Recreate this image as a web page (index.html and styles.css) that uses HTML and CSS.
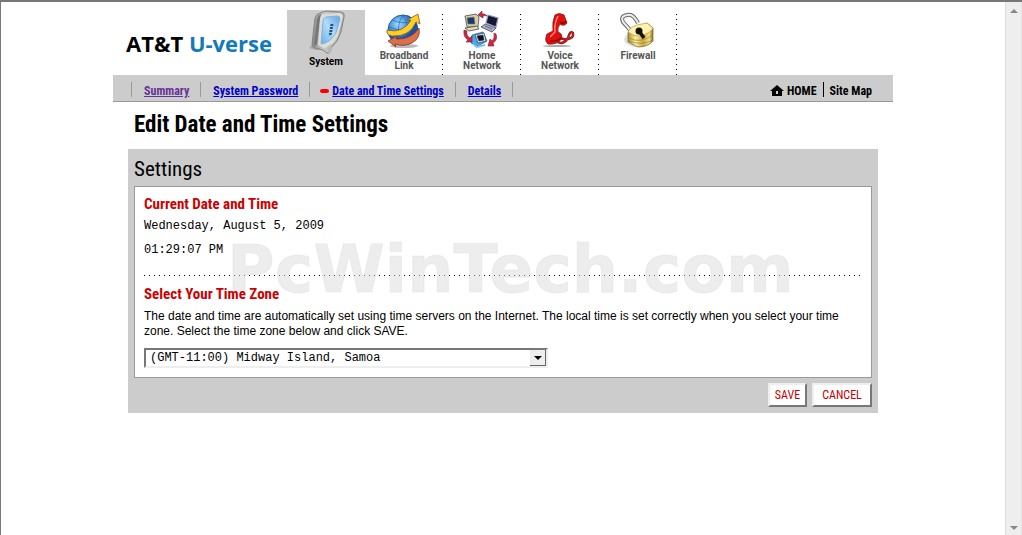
FILE: index.html
```html
<!DOCTYPE html>
<html lang="en">
<head>
<meta charset="utf-8">
<title>Edit Date and Time Settings</title>
<link rel="stylesheet" href="styles.css">
</head>
<body>
<div class="window">
  <div class="page">
    <header class="header">
      <a class="logo" href="#"><span class="logo-att">AT&amp;T</span> <span class="logo-uverse">U-verse</span></a>
      <nav class="tabs" aria-label="Sections">
        <a class="tab tab-active" href="#">
          <svg class="tab-icon" viewBox="0 0 48 44" aria-hidden="true">
            <defs>
              <linearGradient id="shell" x1="0" x2="1"><stop offset="0" stop-color="#858585"/><stop offset=".35" stop-color="#c9c9c6"/><stop offset="1" stop-color="#a4a4a0"/></linearGradient>
              <linearGradient id="screen" x1="0" x2="1" y1="1" y2="0"><stop offset="0" stop-color="#6aaeea"/><stop offset=".5" stop-color="#b4dcfb"/><stop offset="1" stop-color="#5aa5e8"/></linearGradient>
            </defs>
            <path d="M7 38 16 28 20 40 13 40Z" fill="#aaa"/>
            <path d="M18 3Q14 4 13 8L10 34Q10 38 13 38L21 40 25 43Q28 45 29 38Q36 32 39 22L42 7Q43 2 38 2L24 1Z" fill="url(#shell)" stroke="#858585"/>
            <path d="M19 4Q16 5 15 9L12 34Q13 37 15 34L18 9Z" fill="#777"/>
            <path d="M21 4Q18 6 18 10L16 35 22 38Q31 36 36 26L41 7Q41 3 37 3Z" fill="#deded9"/>
            <path d="M24 7Q21 8 21 11L19 34Q28 33 34 23L38 9Q38 6 35 6Z" fill="url(#screen)" stroke="#7fb2dc"/>
            <path d="M30 14 28 26" stroke="#234e78" stroke-width="3" stroke-dasharray="2 1"/>
            <path d="M26 37V44L30 40 29 34Z" fill="#b8b8b8"/>
          </svg>
          <span class="tab-label">System</span>
        </a>
        <a class="tab" href="#">
          <svg class="tab-icon" viewBox="0 0 48 44" aria-hidden="true">
            <defs><radialGradient id="globe" cx=".35" cy=".3"><stop offset="0" stop-color="#a8dcff"/><stop offset=".6" stop-color="#4496dc"/><stop offset="1" stop-color="#1c4f9d"/></radialGradient></defs>
            <ellipse cx="24" cy="36" rx="14" ry="2" fill="#bbb"/>
            <circle cx="23" cy="20" r="15" fill="url(#globe)" stroke="#245ba5"/>
            <path d="M12 10Q23 15 35 11M9 17Q23 23 37 18M23 5Q14 18 22 35M23 5Q31 18 24 35" fill="none" stroke="#2469b6" stroke-width=".7"/>
            <path d="M7 20Q23 24 31 10L27 10 38 4 40 14 36 12Q30 27 12 26Q6 25 7 20Z" fill="#fbcf2b" stroke="#8b5c15" stroke-width=".8"/>
            <path d="M39 18Q41 28 32 33Q24 37 15 34L16 37 8 31 17 26 16 29Q31 30 39 18Z" fill="#dc704c" stroke="#82351f" stroke-width=".8"/>
          </svg>
          <span class="tab-label">Broadband<br>Link</span>
        </a>
        <a class="tab" href="#">
          <svg class="tab-icon" viewBox="0 0 48 44" aria-hidden="true">
            <g stroke="#34343e" stroke-width=".7">
              <path d="M7 6 18 4 21 7 20 17 9 17Z" fill="#d5d1a5"/><path d="M9 8 16 7 17 14 10 14Z" fill="#1c327e" stroke="#777855"/><path d="M7 18 19 16 21 19 11 21Z" fill="#ddd9b2"/>
              <path d="M30 5 40 8 38 17 28 13Z" fill="#111936" stroke="#9a9abb" stroke-width="1.2"/><path d="M27 14 38 18 34 22 23 17Z" fill="#aaaed0"/><path d="M27 16 34 19" stroke="#484865"/>
              <path d="M14 25 25 22 29 31 20 36 13 33Z" fill="#45a8ed" stroke="#1667a9"/><path d="M17 25 26 23 28 31 20 33Z" fill="#edf9ff"/><path d="M19 26 25 25 26 30 21 31Z" fill="#0c1429"/>
              <path d="M15 34 19 37 27 35" fill="none" stroke="#7fbfe9" stroke-width="2"/>
            </g>
            <path d="M29 6Q26 3 24 4V1L20 5 25 8V6Q27 5 29 6ZM6 20Q5 27 10 30L8 32H14V26L12 28Q8 26 9 21ZM36 23Q37 28 34 31L32 29 30 36H36L35 33Q40 30 38 24Z" fill="#d12744" stroke="#7f1630" stroke-width=".6"/>
          </svg>
          <span class="tab-label">Home<br>Network</span>
        </a>
        <a class="tab" href="#">
          <svg class="tab-icon" viewBox="0 0 48 44" aria-hidden="true">
            <ellipse cx="21" cy="36" rx="14" ry="1" fill="#aaa"/>
            <path d="M20 31Q27 36 32 28Q34 20 37 23Q38 28 32 29Q26 30 22 27" fill="none" stroke="#7d1010" stroke-width="2.4"/>
            <path d="M20 31Q27 36 32 28Q34 20 37 23Q38 28 32 29Q26 30 22 27" fill="none" stroke="#e22727"/>
            <path d="M19 5Q23 2 28 5L31 13Q28 17 24 14Q21 18 22 22Q26 23 26 28Q22 35 12 34Q8 31 11 24L17 21Q16 11 19 5Z" fill="#e30f0f" stroke="#881010" stroke-width=".8"/>
            <path d="M22 6Q18 14 19 22L14 27" fill="none" stroke="#ff8c7c" stroke-width="1.4"/>
            <path d="M24 12Q27 15 30 11M14 31Q22 32 25 27" fill="none" stroke="#890909" stroke-width="1.4"/>
          </svg>
          <span class="tab-label">Voice<br>Network</span>
        </a>
        <a class="tab" href="#">
          <svg class="tab-icon" viewBox="0 0 48 44" aria-hidden="true">
            <defs><linearGradient id="brass" x1="0" x2="1"><stop offset="0" stop-color="#a98e35"/><stop offset=".3" stop-color="#fff1a0"/><stop offset=".6" stop-color="#c6a840"/><stop offset=".85" stop-color="#f5df85"/><stop offset="1" stop-color="#897026"/></linearGradient></defs>
            <path d="M11 27Q7 32 19 37L34 36 15 22Z" fill="#ddd"/>
            <path d="M17 21 9 12Q6 6 13 5Q19 3 24 13" fill="none" stroke="#666" stroke-width="4"/>
            <path d="M17 21 9 12Q6 6 13 5Q19 3 24 13" fill="none" stroke="#eee" stroke-width="2"/>
            <path d="M14 22 33 13 39 18V31Q34 37 24 37L14 32Z" fill="url(#brass)" stroke="#75642b" stroke-width=".7"/>
            <path d="M14 22Q16 17 23 15L33 13 39 18Q37 23 26 26Q20 27 14 22Z" fill="#fff2b1" stroke="#b09538" stroke-width=".7"/>
            <path d="M15 28Q26 34 39 25M15 31Q28 36 39 30" fill="none" stroke="#9c802d" stroke-width=".7"/>
            <circle cx="25" cy="21" r="3.5" fill="#151006"/><path d="M25 21 30 28" stroke="#151006" stroke-width="3.5"/>
          </svg>
          <span class="tab-label">Firewall</span>
        </a>
      </nav>
    </header>
    <div class="subbar">
      <nav class="subnav" aria-label="System pages">
        <a class="sublink visited" href="#">Summary</a>
        <a class="sublink" href="#">System Password</a>
        <a class="sublink current" href="#">Date and Time Settings</a>
        <a class="sublink" href="#">Details</a>
      </nav>
      <nav class="utility" aria-label="Site">
        <a class="home" href="#"><svg class="home-icon" viewBox="0 0 14 11" aria-hidden="true"><path d="M7 0 14 6H12V11H2V6H0ZM6 6V9H8V6Z" fill="#000" fill-rule="evenodd"/></svg>HOME</a>
        <a class="sitemap" href="#">Site Map</a>
      </nav>
    </div>
    <main class="main">
      <h1 class="title">Edit Date and Time Settings</h1>
      <form class="panel">
        <h2 class="panel-title">Settings</h2>
        <div class="box">
          <section class="now">
            <h3 class="heading">Current Date and Time</h3>
            <p class="stamp">Wednesday, August 5, 2009</p>
            <p class="stamp">01:29:07 PM</p>
          </section>
          <section class="zone">
            <h3 class="heading"><label for="tz">Select Your Time Zone</label></h3>
            <p class="help">The date and time are automatically set using time servers on the Internet. The local time is set correctly when you select your time zone. Select the time zone below and click SAVE.</p>
            <div class="select-wrap">
              <select class="select" id="tz"><option>(GMT-11:00) Midway Island, Samoa</option></select>
              <span class="select-arrow" aria-hidden="true"></span>
            </div>
          </section>
          <div class="watermark">PcWinTech.com</div>
        </div>
        <div class="actions">
          <button class="button" type="submit">SAVE</button>
          <button class="button button-wide" type="button">CANCEL</button>
        </div>
      </form>
    </main>
  </div>
  <div class="scrollbar" aria-hidden="true"><span class="scroll-up"></span><span class="scroll-down"></span></div>
</div>
</body>
</html>
```
FILE: styles.css
```css
:root { --narrow: "Liberation Sans Narrow", "Arial Narrow", "Roboto Condensed", "Liberation Sans", sans-serif; }
* { box-sizing: border-box; }
body {
  margin: 0;
  background: #fff;
  color: #000;
  font-family: "Liberation Sans", Arial, sans-serif;
  font-size: 12px;
}
h1, h2, h3, p { margin: 0; }
.window {
  display: flex;
  min-height: 100vh;
  border-top: 2px solid #777;
  border-left: 1px solid #777;
}
.page {
  flex: 1;
  max-width: 780px;
  margin: 0 auto;
  padding-top: 8px;
}
.header { display: flex; height: 65px; }
.logo {
  width: 174px;
  padding: 17px 0 0 13px;
  font: 700 22px/32px "Open Sans", sans-serif;
  text-decoration: none;
  white-space: nowrap;
}
.logo-att { color: #000; }
.logo-uverse { color: #1479b8; }
.tabs { display: flex; }
.tab {
  display: flex;
  flex-direction: column;
  align-items: center;
  width: 78px;
  color: #555;
  text-align: center;
  text-decoration: none;
  background: linear-gradient(#000 1px, transparent 1px) right 4px / 1px 5px repeat-y;
}
.tab-active { background: #ccc; color: #000; }
.tab-icon { width: 48px; height: 44px; margin-bottom: -3px; }
.tab-label { font: 700 10px/10px Roboto, sans-serif; }
.tab-active .tab-icon { margin-bottom: 3px; }
.subbar {
  display: flex;
  justify-content: space-between;
  height: 27px;
  padding: 7px 21px 0 18px;
  background: #ccc;
  border-bottom: 1px solid #999;
  font: 700 12px/15px var(--narrow);
}
.subnav, .utility { display: flex; height: 15px; }
.sublink {
  padding: 2px 11px 0 12px;
  border-left: 1px solid #999;
  color: #00c;
}
.sublink:last-child { border-right: 1px solid #999; }
.visited { color: #639; }
.current { padding-left: 10px; }
.current::before {
  content: "";
  display: inline-block;
  width: 9px;
  height: 4px;
  margin-right: 3px;
  border-radius: 2px;
  background: #f00;
  vertical-align: 2px;
}
.utility a { padding-top: 2px; color: #000; text-decoration: none; }
.utility .home { padding-right: 6px; border-right: 1px solid #000; }
.home-icon { width: 14px; height: 11px; margin-right: 3px; vertical-align: -1px; }
.utility .sitemap { padding-left: 6px; }
.main { padding: 0 15px; }
.title {
  padding: 9px 6px 10px;
  font: 700 23px/28px var(--narrow);
}
.panel { padding: 7px 6px 6px; background: #ccc; }
.panel-title {
  margin-bottom: 4px;
  font: 400 21px/26px var(--narrow);
}
.box {
  position: relative;
  padding: 8px 9px 9px;
  background: #fff;
  border: 1px solid #999;
}
.heading {
  color: #c00;
  font: 700 15px/18px var(--narrow);
}
.zone .heading { position: relative; z-index: 1; }
.stamp { margin-top: 4px; font: 12px/18px "Liberation Mono", monospace; }
.stamp + .stamp { margin-top: 6px; }
.now {
  padding-bottom: 17px;
  background: linear-gradient(90deg, #000 1px, transparent 1px) left bottom / 5px 1px repeat-x;
}
.zone { padding-top: 9px; }
.help { margin: 6px 0 9px; line-height: 15px; }
.select-wrap { position: relative; width: 404px; max-width: 100%; }
.select {
  display: block;
  width: 100%;
  height: 20px;
  padding: 1px 22px 0 4px;
  appearance: none;
  background: #fff;
  border: 2px solid;
  border-color: #777 #eee #eee #777;
  border-radius: 0;
  color: #000;
  font: 12px/15px "Liberation Mono", monospace;
}
.select-arrow {
  position: absolute;
  top: 2px;
  right: 2px;
  bottom: 2px;
  display: flex;
  align-items: center;
  justify-content: center;
  width: 16px;
  background: #eee;
  border-right: 1px solid #666;
  border-bottom: 1px solid #666;
  pointer-events: none;
}
.select-arrow::before {
  content: "";
  border: 4px solid transparent;
  border-top-color: #000;
  border-bottom: 0;
}
.watermark {
  position: absolute;
  top: 46px;
  left: 92px;
  color: rgba(219, 219, 219, .5);
  -webkit-text-stroke: 1px rgba(200, 200, 200, .2);
  font: 700 65px/74px "DejaVu Sans", sans-serif;
  pointer-events: none;
}
.actions { display: flex; justify-content: flex-end; gap: 5px; padding-top: 5px; }
.button {
  width: 39px;
  height: 24px;
  padding: 0;
  background: #fff;
  border: 2px solid;
  border-color: #eee #777 #777 #eee;
  color: #c00;
  font: 12px/18px var(--narrow);
}
.button-wide { width: 60px; }
.scrollbar {
  display: flex;
  flex-direction: column;
  align-items: center;
  justify-content: space-between;
  width: 17px;
  padding: 7px 0 5px;
  background: #eee;
  border-left: 1px solid #ddd;
  border-right: 1px solid #e4e4e4;
}
.scroll-up, .scroll-down { border: 4px solid transparent; }
.scroll-up { border-top: 0; border-bottom-color: #888; }
.scroll-down { border-bottom: 0; border-top-color: #888; }
```
